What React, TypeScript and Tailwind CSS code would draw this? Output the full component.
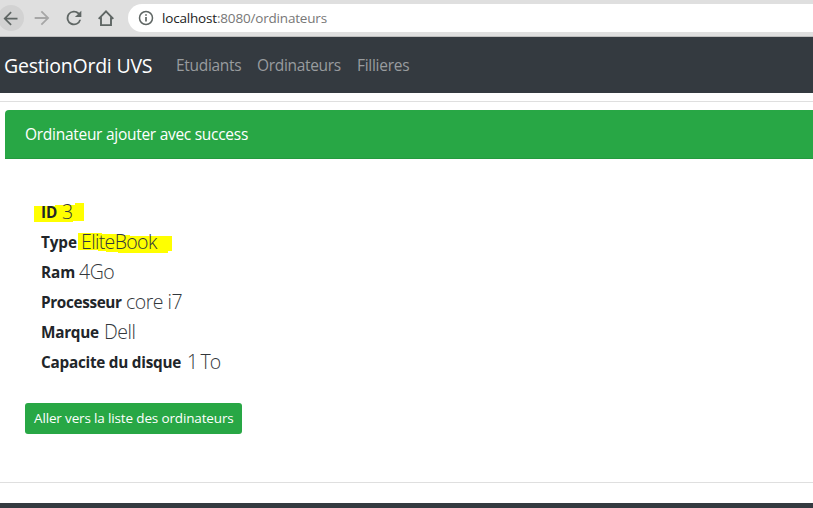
const specs = [
  { label: 'ID', value: '3', labelClass: 'w-[18px]', valueClass: '' },
  { label: 'Type', value: 'EliteBook', labelClass: 'w-[37px] tracking-[-0.1px]', valueClass: 'tracking-[-0.63px]' },
  { label: 'Ram', value: '4Go', labelClass: 'w-[35px] tracking-[-0.1px]', valueClass: 'tracking-[-0.5px]' },
  { label: 'Processeur', value: 'core i7', labelClass: 'w-[82px] tracking-[-0.35px]', valueClass: 'tracking-[-0.5px]' },
  { label: 'Marque', value: 'Dell', labelClass: 'w-[60px] tracking-[-0.25px]', valueClass: 'tracking-[-0.5px]' },
  { label: 'Capacite du disque', value: '1 To', labelClass: 'w-[143px] tracking-[-0.25px]', valueClass: 'tracking-[-0.9px] [word-spacing:-1px]' },
];

function BrowserBar() {
  return (
    <div className="flex h-[37px] items-center border-b border-[#bdbdbd] bg-[#dfdfdf] text-[#5f6664]">
      <div className="-ml-0.5 flex size-[26px] shrink-0 items-center justify-center rounded-full bg-[#d2d2d2]">
        <svg className="size-[21px] -translate-x-px" viewBox="0 0 24 24" fill="currentColor">
          <path d="M20 11H7.8l5.6-5.6L12 4l-8 8 8 8 1.4-1.4L7.8 13H20z" />
        </svg>
      </div>
      <svg className="ml-[7px] size-[22px] shrink-0 text-[#a6a6a6]" viewBox="0 0 24 24" fill="currentColor">
        <path d="M4 11h12.2l-5.6-5.6L12 4l8 8-8 8-1.4-1.4 5.6-5.6H4z" />
      </svg>
      <svg className="ml-[10px] size-[22px] shrink-0" viewBox="0 0 24 24" fill="currentColor">
        <path d="M17.65 6.35A8 8 0 1 0 19.73 14h-2.08A6 6 0 1 1 12 6c1.66 0 3.14.69 4.22 1.78L13 11h7V4z" />
      </svg>
      <svg className="ml-[13px] size-4 shrink-0" viewBox="0 0 16 16" fill="none" stroke="currentColor" strokeWidth="1.9">
        <path d="M.7 8.9 8 1.4l7.3 7.5M3 7.2v8h10v-8" />
      </svg>
      <div className="ml-3.5 flex h-7 flex-1 items-center rounded-l-full bg-white pl-2.5">
        <svg className="size-4 shrink-0" viewBox="0 0 16 16" fill="none" stroke="currentColor" strokeWidth="1.5">
          <circle cx="8" cy="8" r="6.5" />
          <path d="M8 7v4.5M8 4.2v1.6" strokeWidth="1.7" />
        </svg>
        <span className="ml-2 whitespace-nowrap text-[13.5px] tracking-[-0.18px] text-[#777]">
          <span className="text-[#222]">localhost</span>:8080/ordinateurs
        </span>
      </div>
    </div>
  );
}

function Navbar() {
  return (
    <nav className="flex h-14 items-center whitespace-nowrap bg-[#343a40] pl-1 pt-0.5 text-[15.5px] text-[#999c9f]">
      <a className="w-[172px] text-[19.5px] tracking-[-0.22px] text-white">GestionOrdi UVS</a>
      <a className="w-[81px] tracking-[-0.3px]">Etudiants</a>
      <a className="w-[100px] tracking-[-0.32px]">Ordinateurs</a>
      <a className="tracking-[-0.28px]">Fillieres</a>
    </nav>
  );
}

export default function App() {
  return (
    <div className="flex h-[508px] w-[813px] flex-col overflow-hidden bg-white font-['Open_Sans',sans-serif] text-[#212529]">
      <BrowserBar />
      <Navbar />
      <main className="mt-2 border-t border-[#dfdfdf] pt-2">
        <div className="ml-[5px] h-[49px] rounded-tl border-b border-[#249a3e] bg-[#28a745] pl-5 text-[15.5px] leading-[48px] tracking-[-0.28px] text-white">
          Ordinateur ajouter avec success
        </div>
        <div className="relative mt-[37px] pl-[41px]">
          <svg className="absolute left-[34px] top-0 h-[60px] w-[140px]" viewBox="0 0 140 60" fill="#ffff00">
            <path d="M0 10h21V9h20V7h9v18H39v1H0z" />
            <path d="M44 37h24v1h16v1h12v1h42v15h-4v2H84v-1H72v-1H64v-1H44z" />
          </svg>
          <ul className="relative top-px">
            {specs.map((spec) => (
              <li key={spec.label} className="flex h-[30px] items-baseline whitespace-nowrap leading-[30px]">
                <b className={'shrink-0 -translate-y-px text-[15.3px] font-bold ' + spec.labelClass}>{spec.label}</b>
                <span className={'ml-[3px] text-[19.5px] font-light text-[#33373b] ' + spec.valueClass}>{spec.value}</span>
              </li>
            ))}
          </ul>
        </div>
        <button className="ml-[25px] mt-[27px] block h-[31px] w-[217px] whitespace-nowrap rounded-[3px] bg-[#28a745] pb-px pl-[9px] text-left text-[13.5px] tracking-[-0.15px] text-white">
          Aller vers la liste des ordinateurs
        </button>
      </main>
      <hr className="mt-12 border-t border-[#dfdfdf]" />
      <footer className="mt-5 flex-1 bg-[#343a40]" />
    </div>
  );
}
